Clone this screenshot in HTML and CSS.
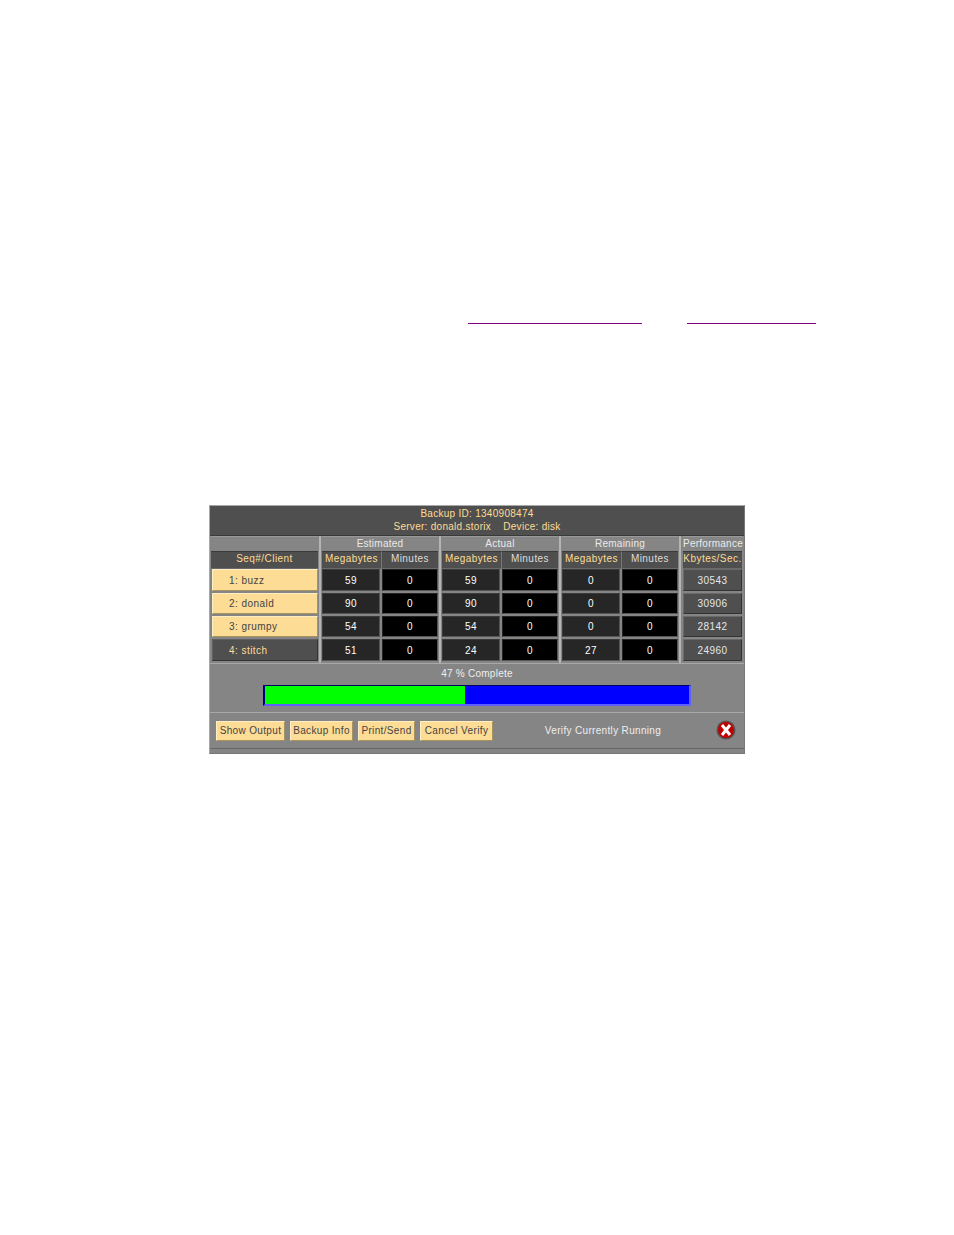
FILE: index.html
```html
<!DOCTYPE html>
<html lang="en">
<head>
<meta charset="utf-8">
<title>Backup Monitor</title>
<link rel="stylesheet" href="styles.css">
</head>
<body>
<div class="rules"><span class="rule rule-a"></span><span class="rule rule-b"></span></div>
<main class="panel">
  <header class="banner">
    <div>Backup ID: 1340908474</div>
    <div>Server: donald.storix &nbsp;&nbsp; Device: disk</div>
  </header>
  <section class="groups">
    <div class="group g-client">
      <div class="title"></div>
      <div class="subs"><div class="sub">Seq#/Client</div></div>
      <div class="rows one">
        <div class="cell client">1: buzz</div>
        <div class="cell client">2: donald</div>
        <div class="cell client">3: grumpy</div>
        <div class="cell client off">4: stitch</div>
      </div>
    </div>
    <div class="group g-data">
      <div class="title">Estimated</div>
      <div class="subs two"><div class="sub">Megabytes</div><div class="sub">Minutes</div></div>
      <div class="rows two">
        <div class="cell dark">59</div><div class="cell black">0</div>
        <div class="cell dark">90</div><div class="cell black">0</div>
        <div class="cell dark">54</div><div class="cell black">0</div>
        <div class="cell dark">51</div><div class="cell black">0</div>
      </div>
    </div>
    <div class="group g-data">
      <div class="title">Actual</div>
      <div class="subs two"><div class="sub">Megabytes</div><div class="sub">Minutes</div></div>
      <div class="rows two">
        <div class="cell dark">59</div><div class="cell black">0</div>
        <div class="cell dark">90</div><div class="cell black">0</div>
        <div class="cell dark">54</div><div class="cell black">0</div>
        <div class="cell dark">24</div><div class="cell black">0</div>
      </div>
    </div>
    <div class="group g-data">
      <div class="title">Remaining</div>
      <div class="subs two"><div class="sub">Megabytes</div><div class="sub">Minutes</div></div>
      <div class="rows two">
        <div class="cell dark">0</div><div class="cell black">0</div>
        <div class="cell dark">0</div><div class="cell black">0</div>
        <div class="cell dark">0</div><div class="cell black">0</div>
        <div class="cell dark">27</div><div class="cell black">0</div>
      </div>
    </div>
    <div class="group g-perf">
      <div class="title">Performance</div>
      <div class="subs"><div class="sub">Kbytes/Sec.</div></div>
      <div class="rows one">
        <div class="cell perf">30543</div>
        <div class="cell perf">30906</div>
        <div class="cell perf">28142</div>
        <div class="cell perf">24960</div>
      </div>
    </div>
  </section>
  <div class="percent">47 % Complete</div>
  <div class="bar"><div class="fill"></div></div>
  <footer class="actions">
    <button class="btn b1">Show Output</button>
    <button class="btn b2">Backup Info</button>
    <button class="btn b3">Print/Send</button>
    <button class="btn b4">Cancel Verify</button>
    <span class="status">Verify Currently Running</span>
    <svg class="stop" width="20" height="20" viewBox="0 0 20 20" aria-hidden="true">
      <circle cx="10" cy="10" r="9.5" fill="#555"/>
      <circle cx="10" cy="10" r="8" fill="#c00000"/>
      <path d="M6 5 L14 15 M14 5 L6 15" stroke="#fff" stroke-width="3" fill="none"/>
    </svg>
  </footer>
</main>
</body>
</html>
```
FILE: styles.css
```css
* { box-sizing: border-box; }
html, body { margin: 0; padding: 0; background: #fff; }
body { width: 954px; height: 1235px; overflow: hidden; font-family: "Liberation Sans", Arial, sans-serif; font-size: 10px; letter-spacing: 0.45px; }

.rules { display: flex; gap: 45px; padding: 323px 0 0 468px; }
.rule { display: block; height: 1px; background: #800080; }
.rule-a { width: 174px; }
.rule-b { width: 129px; }

.panel { width: 536px; height: 249px; margin: 181px 0 0 209px; background: #858585; border-top: 1px solid #a8a8a8; border-left: 1px solid #a8a8a8; border-right: 1px solid #777; border-bottom: 1px solid #777; display: flex; flex-direction: column; }

.banner { height: 30px; background: #4f4f4f; border-bottom: 1px solid #3a3a3a; color: #fddc96; text-align: center; line-height: 13px; padding-top: 1px; letter-spacing: 0.28px; }

.groups { display: flex; height: 128px; border-bottom: 1px solid #a8a8a8; padding-left: 1px; background: #858585; }
.group { height: 127px; display: flex; flex-direction: column; border-right: 2px solid #b4b4b4; padding-right: 1px; }
.g-client { width: 110px; }
.g-data { width: 120px; padding-left: 1px; }
.g-perf { width: 63px; border-right: 0; padding-left: 2px; padding-right: 2px; }

.title { height: 15px; line-height: 14px; text-align: center; color: #eaeaea; background: #858585; border-top: 1px solid #999; letter-spacing: 0.25px; white-space: nowrap; }
.subs { display: grid; height: 18px; background: #4f4f4f; }
.subs.two { grid-template-columns: 60px 1fr; }
.sub { color: #fddc96; text-align: center; line-height: 14px; border-top: 1px solid #3a3a3a; border-bottom: 1px solid #6a6a6a; border-right: 1px solid #777; white-space: nowrap; }
.sub:last-child { border-right: 0; }
.g-data .sub { color: #ddd; }
.g-data .sub:first-child { color: #fddc96; }

.rows { display: grid; grid-template-rows: 24px 23px 23px 24px; }
.rows.one { grid-template-columns: 1fr; }
.rows.two { grid-template-columns: 60px 1fr; }

.cell { margin: 0 0 2px 0; display: flex; align-items: center; justify-content: center; color: #fff; border: 1px solid #555; }
.client { background: #fddc96; color: #444; justify-content: flex-start; padding-left: 16px; border-color: #ffedc4 #a8935f #a8935f #ffedc4; margin-left: 1px; }
.client.off { background: #4f4f4f; color: #fddc96; border-color: #5f5f5f #333 #333 #5f5f5f; }
.dark { background: #262626; border-color: #3a3a3a #555 #555 #3a3a3a; margin-right: 2px; }
.black { background: #000; border-color: #222 #555 #555 #222; }
.perf { background: #4f4f4f; color: #e6e6e6; border-color: #6a6a6a #333 #333 #6a6a6a; }

.percent { height: 21px; line-height: 20px; text-align: center; color: #eee; letter-spacing: 0.25px; }
.bar { width: 428px; height: 21px; margin-left: 53px; background: #0000ff; border-style: solid; border-width: 1px 2px 2px 2px; border-color: #000060 #6060ff #6060ff #000080; flex: none; }
.fill { width: 200px; height: 100%; background: #00ff00; }

.actions { height: 37px; margin-top: 6px; border-top: 1px solid #a8a8a8; border-bottom: 1px solid #666; display: flex; align-items: center; padding-left: 6px; letter-spacing: 0.35px; }
.btn { height: 20px; padding: 0; margin: 0 5px 0 0; background: #fddc96; color: #444; border: 1px solid; border-color: #ffedc4 #a8935f #a8935f #ffedc4; font: inherit; letter-spacing: inherit; text-align: center; }
.b1 { width: 69px; }
.b2 { width: 63px; }
.b3 { width: 57px; }
.b4 { width: 73px; margin-right: 0; }
.status { width: 220px; text-align: center; color: #eee; letter-spacing: 0.33px; }
.stop { margin-left: 3px; margin-bottom: 1px; }
```
